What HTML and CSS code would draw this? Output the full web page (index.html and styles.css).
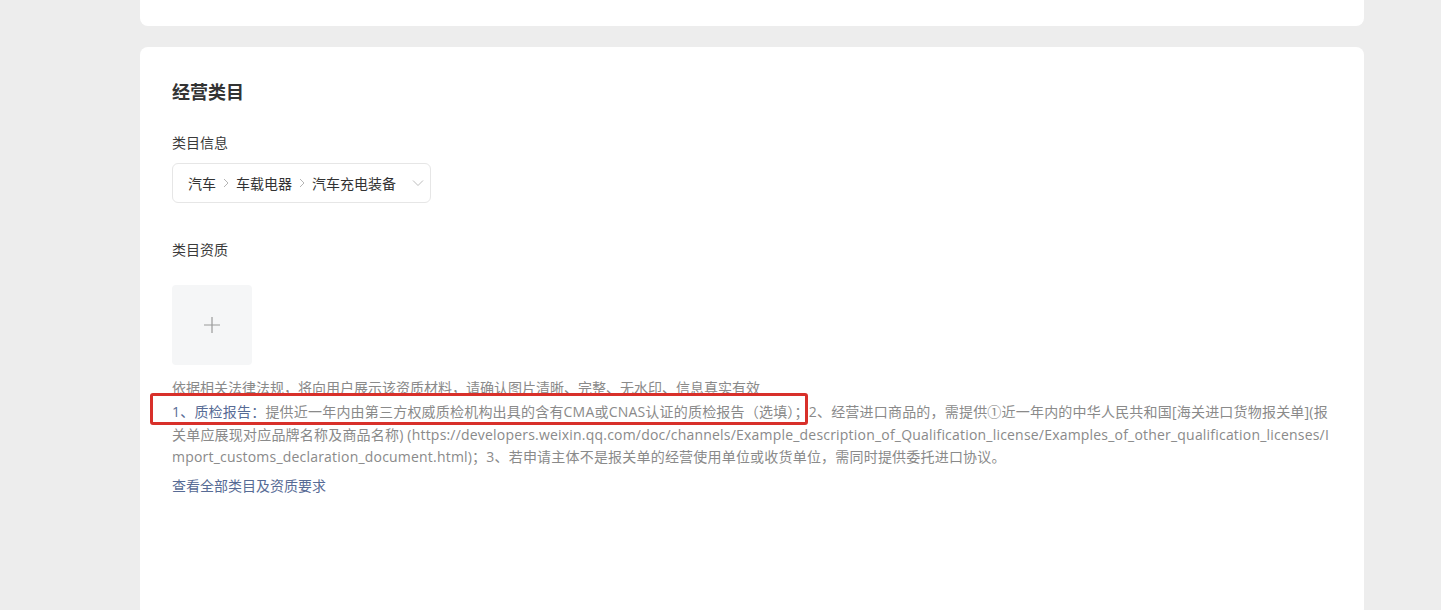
FILE: index.html
```html
<!DOCTYPE html>
<html lang="zh-CN">
<head>
    <meta charset="UTF-8">
    <meta name="viewport" content="width=device-width, initial-scale=1.0">
    <title>经营类目</title>
    <link rel="stylesheet" href="styles.css">
</head>
<body>
    <div class="page">
        <div class="card card-top"></div>

        <section class="card category-card">
            <h2 class="section-title">经营类目</h2>

            <div class="field-label">类目信息</div>
            <div class="cascader">
                <span>汽车</span>
                <svg class="sep" width="8" height="10" viewBox="0 0 8 10"><path d="M2 1l4 4-4 4" fill="none" stroke="#b5b5b5" stroke-width="1"/></svg>
                <span>车载电器</span>
                <svg class="sep" width="8" height="10" viewBox="0 0 8 10"><path d="M2 1l4 4-4 4" fill="none" stroke="#b5b5b5" stroke-width="1"/></svg>
                <span>汽车充电装备</span>
                <svg class="arrow" width="12" height="8" viewBox="0 0 12 8"><path d="M1 1.5l5 5 5-5" fill="none" stroke="#bdbdbd" stroke-width="1"/></svg>
            </div>

            <div class="field-label qual-label">类目资质</div>
            <div class="upload-box">
                <svg width="16" height="16" viewBox="0 0 16 16"><path d="M8 0v16M0 8h16" stroke="#9a9a9a" stroke-width="1.2"/></svg>
            </div>

            <p class="tip">依据相关法律法规，将向用户展示该资质材料，请确认图片清晰、完整、无水印、信息真实有效</p>
            <p class="tip requirement"><span class="req-name">1、质检报告：</span>提供近一年内由第三方权威质检机构出具的含有CMA或CNAS认证的质检报告（选填）；2、经营进口商品的，需提供①近一年内的中华人民共和国[海关进口货物报关单](报关单应展现对应品牌名称及商品名称) (https://developers.weixin.qq.com/doc/channels/Example_description_of_Qualification_license/Examples_of_other_qualification_licenses/Import_customs_declaration_document.html)；3、若申请主体不是报关单的经营使用单位或收货单位，需同时提供委托进口协议。</p>
            <a class="all-link" href="#">查看全部类目及资质要求</a>

            <div class="mark-box"></div>
        </section>
    </div>
</body>
</html>
```

FILE: styles.css
```css
body {
    margin: 0;
    background-color: #ededed;
    font-family: "Open Sans", "Noto Sans CJK SC", sans-serif;
    color: #333;
    overflow: hidden;
}

.page {
    width: 1224px;
    margin-left: 140px;
    display: flex;
    flex-direction: column;
    gap: 21px;
}

.card {
    background-color: #fff;
    border-radius: 8px;
}

.card-top {
    height: 26px;
    border-radius: 0 0 8px 8px;
}

.category-card {
    position: relative;
    padding: 33px 32px 120px;
    display: flex;
    flex-direction: column;
    align-items: flex-start;
}

.section-title {
    margin: 0;
    font-size: 18px;
    line-height: 24px;
    font-weight: 700;
    color: #333;
}

.field-label {
    margin-top: 29px;
    font-size: 14px;
    line-height: 20px;
    color: #3a3a3a;
}

.cascader {
    margin-top: 10px;
    box-sizing: border-box;
    width: 259px;
    height: 40px;
    border: 1px solid #e6e6e6;
    border-radius: 6px;
    padding: 0 0 0 15px;
    display: flex;
    align-items: center;
    gap: 6px;
    font-size: 14px;
    color: #333;
}

.cascader .arrow {
    margin-left: auto;
    margin-right: 6px;
}

.qual-label {
    margin-top: 37px;
}

.upload-box {
    margin-top: 25px;
    width: 80px;
    height: 80px;
    border-radius: 4px;
    background-color: #f5f6f7;
    display: flex;
    align-items: center;
    justify-content: center;
}

.tip {
    margin: 0;
    font-size: 14px;
    line-height: 22px;
    color: #8a8a8a;
}

.tip:first-of-type {
    margin-top: 12px;
}

.requirement {
    margin-top: 2px;
    line-height: 22.5px;
    letter-spacing: 0.2px;
    word-break: break-all;
}

.req-name {
    color: #576b95;
}

.all-link {
    margin-top: 6px;
    font-size: 14px;
    line-height: 22px;
    color: #576b95;
    text-decoration: none;
}

.mark-box {
    position: absolute;
    left: 10px;
    top: 346px;
    width: 658px;
    height: 32px;
    box-sizing: border-box;
    border: 3px solid #d8302a;
    border-radius: 3px;
}
```
